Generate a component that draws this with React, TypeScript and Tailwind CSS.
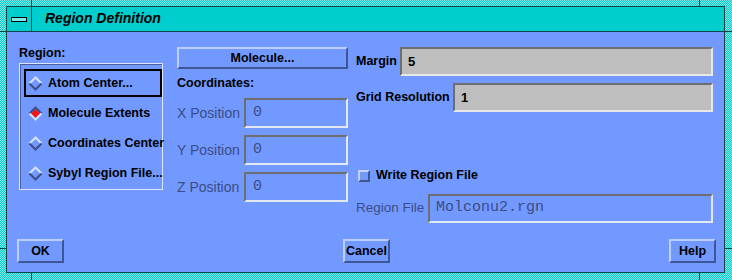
import React from 'react';

const BLUE = 'bg-[#7299ff]';

function Diamond({ selected = false }: { selected?: boolean }) {
  const light = '#d6e0ff';
  const dark = '#3e4f88';
  const top = selected ? dark : light;
  const bottom = selected ? light : dark;
  return (
    <svg width="15" height="15" viewBox="0 0 15 15" className="shrink-0">
      {selected && <polygon points="7.5,3 12,7.5 7.5,12 3,7.5" fill="#ff1010" />}
      <polyline points="1.5,7.5 7.5,1.5 13.5,7.5" fill="none" stroke={top} strokeWidth="2" />
      <polyline points="1.5,7.5 7.5,13.5 13.5,7.5" fill="none" stroke={bottom} strokeWidth="2" />
    </svg>
  );
}

function PushButton({ label, className = '' }: { label: string; className?: string }) {
  return (
    <div
      className={`flex items-center justify-center border-2 border-t-[#bccdff] border-l-[#bccdff] border-b-[#3f5696] border-r-[#3f5696] ${BLUE} text-[12.5px] font-bold text-black ${className}`}
    >
      {label}
    </div>
  );
}

function RadioRow({ label, selected = false, focused = false }: { label: string; selected?: boolean; focused?: boolean }) {
  return (
    <div className="h-[30px] flex items-center">
      <div
        className={`w-[142px] h-[28px] flex items-center gap-[5px] pl-[2px] border-2 whitespace-nowrap ${focused ? 'border-black' : 'border-transparent'}`}
      >
        <Diamond selected={selected} />
        <span className="text-[12.5px] font-bold text-black">{label}</span>
      </div>
    </div>
  );
}

function DimField({ value }: { value: string }) {
  return (
    <div className="w-[104px] h-[30px] flex items-center pl-[7px] border-2 border-t-[#6e6e6e] border-l-[#6e6e6e] border-b-[#e4e8f4] border-r-[#e4e8f4] font-['Liberation_Mono',monospace] text-[15px] text-[#3b4c84]">
      {value}
    </div>
  );
}

function CoordRow({ label, value }: { label: string; value: string }) {
  return (
    <div className="flex items-center h-[30px]">
      <span className="w-[67px] text-[14px] text-[#3b4c84] whitespace-nowrap">{label}</span>
      <DimField value={value} />
    </div>
  );
}

function TextField({ value }: { value: string }) {
  return (
    <div className="flex-1 h-[29px] flex items-center pl-[6px] bg-[#bebebe] border-2 border-t-[#6e6e6e] border-l-[#6e6e6e] border-b-[#e8e8e8] border-r-[#e8e8e8] text-[13px] font-bold text-black">
      {value}
    </div>
  );
}

export default function App() {
  const tick = 'absolute bg-[#0e4444]';
  return (
    <div className="relative w-[732px] h-[280px] pl-[6px] pr-[7px] pt-[6px] pb-[7px] bg-[repeating-conic-gradient(#10caca_0_25%,#7ee6e6_0_50%)] bg-[length:2px_2px] font-['Liberation_Sans',Arial,sans-serif]">
      {/* resize handle ticks */}
      <div className={`${tick} left-[31px] top-0 w-px h-[6px]`} />
      <div className={`${tick} left-[699px] top-0 w-px h-[6px]`} />
      <div className={`${tick} left-[31px] bottom-0 w-px h-[7px]`} />
      <div className={`${tick} left-[699px] bottom-0 w-px h-[7px]`} />
      <div className={`${tick} left-0 top-[31px] w-[6px] h-px`} />
      <div className={`${tick} left-0 top-[248px] w-[6px] h-px`} />
      <div className={`${tick} right-0 top-[31px] w-[7px] h-px`} />
      <div className={`${tick} right-0 top-[248px] w-[7px] h-px`} />

      <div className="w-full h-full flex flex-col border border-[#0e4444]">
        {/* title bar */}
        <div className="h-[25px] flex border-b border-[#0e4444] bg-[#00cdcd]">
          <div className="w-[25px] flex items-center justify-center border-r border-[#0e4444]">
            <div className="w-[16px] h-[5px] border border-black bg-[#7fe8e8]" />
          </div>
          <div className="flex items-center pl-[13px] pb-[2px] text-[14px] font-bold italic text-black">
            Region Definition
          </div>
        </div>

        {/* content */}
        <div className={`flex-1 flex flex-col ${BLUE} pl-[10px] pt-[14px]`}>
          <div className="flex items-start pr-[11px]">
            {/* region radio box */}
            <div className="ml-[2px] w-[144px] shrink-0">
              <div className="h-[15px] leading-[15px] text-[12.5px] font-bold text-black">Region:</div>
              <div className="mt-[2px] h-[127px] pl-[4px] pt-[4px] border border-[#dce5ff] shadow-[inset_1px_1px_0_#4a5f9c]">
                <RadioRow label="Atom Center..." focused />
                <RadioRow label="Molecule Extents" selected />
                <RadioRow label="Coordinates Center" />
                <RadioRow label="Sybyl Region File..." />
              </div>
            </div>

            {/* coordinates */}
            <div className="ml-[14px] w-[171px] shrink-0 flex flex-col">
              <PushButton label="Molecule..." className="mt-[1px] h-[22px] w-full" />
              <div className="mt-[7px] h-[15px] leading-[15px] text-[12.5px] font-bold text-black">Coordinates:</div>
              <div className="mt-[7px] flex flex-col gap-[7px]">
                <CoordRow label="X Position" value="0" />
                <CoordRow label="Y Position" value="0" />
                <CoordRow label="Z Position" value="0" />
              </div>
            </div>

            {/* margin / grid / file */}
            <div className="ml-[8px] flex-1 flex flex-col">
              <div className="mt-[1px] h-[29px] flex items-center">
                <span className="w-[44px] text-[12.5px] font-bold text-black">Margin</span>
                <TextField value="5" />
              </div>
              <div className="mt-[7px] h-[29px] flex items-center">
                <span className="w-[97px] text-[12.5px] font-bold text-black whitespace-nowrap">Grid Resolution</span>
                <TextField value="1" />
              </div>
              <div className="mt-[56px] h-[15px] flex items-center">
                <div className="ml-[2px] w-[12px] h-[12px] border-2 border-t-[#c4d3ff] border-l-[#c4d3ff] border-b-[#3f5696] border-r-[#3f5696]" />
                <span className="ml-[6px] text-[12.5px] font-bold text-black">Write Region File</span>
              </div>
              <div className="mt-[11px] h-[29px] flex items-center">
                <span className="w-[72px] text-[13.5px] text-[#3b4c84] whitespace-nowrap">Region File</span>
                <div className="flex-1 h-[29px] flex items-center pl-[6px] border-2 border-t-[#6e6e6e] border-l-[#6e6e6e] border-b-[#e4e8f4] border-r-[#e4e8f4] font-['Liberation_Mono',monospace] text-[15px] text-[#3b4c84]">
                  Molconu2.rgn
                </div>
              </div>
            </div>
          </div>

          {/* action buttons */}
          <div className="mt-[16px] pr-[8px] flex justify-between">
            <PushButton label="OK" className="w-[47px] h-[24px]" />
            <PushButton label="Cancel" className="w-[47px] h-[24px]" />
            <PushButton label="Help" className="w-[47px] h-[24px]" />
          </div>
        </div>
      </div>
    </div>
  );
}
